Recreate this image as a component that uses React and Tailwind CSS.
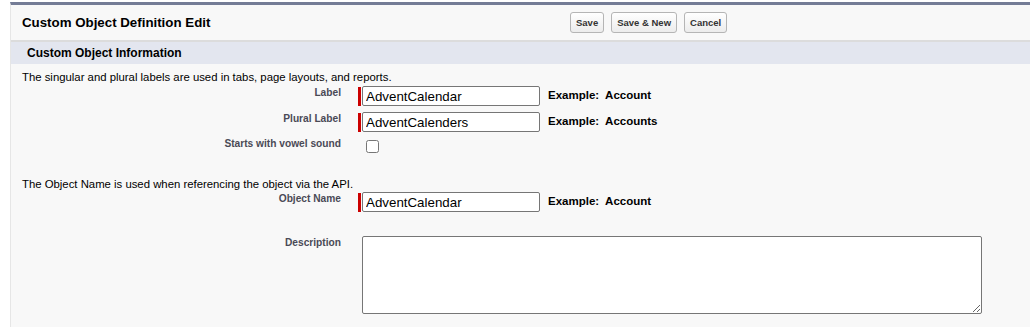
import React from 'react';

const font = { fontFamily: '"Liberation Sans", Arial, sans-serif' };

function Btn({ children }) {
  return (
    <button className="h-[21px] px-[5px] rounded-[3px] border border-[#b5b5b5] bg-gradient-to-b from-[#ffffff] to-[#ececec] text-[9.5px] font-bold text-[#333] leading-none">
      {children}
    </button>
  );
}

function Field({ label, value, example, required = true }) {
  return (
    <div className="flex items-start">
      <div className="w-[330px] text-right text-[10.2px] font-bold text-[#4a4a56] leading-[13px]">{label}</div>
      <div className="ml-[17px] flex items-center">
        <div className={`w-[3px] h-[19px] ${required ? 'bg-[#c00]' : ''}`}></div>
        <input
          readOnly
          value={value}
          className="ml-[1px] w-[178px] h-[20px] px-[3px] bg-white border border-[#767676] rounded-[2px] text-[13.333px] text-black outline-none"
        />
        <span className="ml-[8px] text-[11.5px] font-bold text-[#000] whitespace-pre">{'Example:  ' + example}</span>
      </div>
    </div>
  );
}

export default function App() {
  return (
    <div className="w-[1030px] h-[327px] bg-white pl-[10px] pt-[2px] overflow-hidden" style={font}>
      <div className="h-full bg-[#f8f8f8] border-t-[3px] border-[#747c96] border-l border-l-[#e6e6e6]">
        {/* header */}
        <div className="h-[37px] flex items-center border-b-2 border-[#dcdcdc]">
          <div className="w-[559px] pl-[11px] text-[13.3px] font-bold text-black">Custom Object Definition Edit</div>
          <div className="flex gap-[7px]">
            <Btn>Save</Btn>
            <Btn>Save &amp; New</Btn>
            <Btn>Cancel</Btn>
          </div>
        </div>

        {/* section header */}
        <div className="h-[22px] bg-[#e3e6ef] flex items-center pl-[16px] text-[12px] font-bold text-black">
          Custom Object Information
        </div>

        {/* body */}
        <div className="pt-[6px] text-[11.35px] text-black">
          <p className="pl-[11px] leading-[14px]">The singular and plural labels are used in tabs, page layouts, and reports.</p>
          <div className="mt-[2px]">
            <Field label="Label" value="AdventCalendar" example="Account" />
          </div>
          <div className="mt-[6px]">
            <Field label="Plural Label" value="AdventCalenders" example="Accounts" />
          </div>
          <div className="mt-[5px] flex items-start">
            <div className="w-[330px] text-right text-[10.2px] font-bold text-[#4a4a56] leading-[13px]">Starts with vowel sound</div>
            <div className="ml-[17px] pl-[8px] pt-[3px]">
              <input type="checkbox" className="w-[13px] h-[13px] m-0 block" />
            </div>
          </div>

          <p className="mt-[24px] pl-[11px] leading-[14px]">The Object Name is used when referencing the object via the API.</p>
          <div className="mt-[1px]">
            <Field label="Object Name" value="AdventCalendar" example="Account" />
          </div>

          <div className="mt-[24px] flex items-start">
            <div className="w-[330px] text-right text-[10.2px] font-bold text-[#4a4a56] leading-[13px]">Description</div>
            <div className="ml-[21px]">
              <textarea className="block w-[620px] h-[78px] bg-white border border-[#767676] rounded-[2px] outline-none resize-both"></textarea>
            </div>
          </div>
        </div>
      </div>
    </div>
  );
}
